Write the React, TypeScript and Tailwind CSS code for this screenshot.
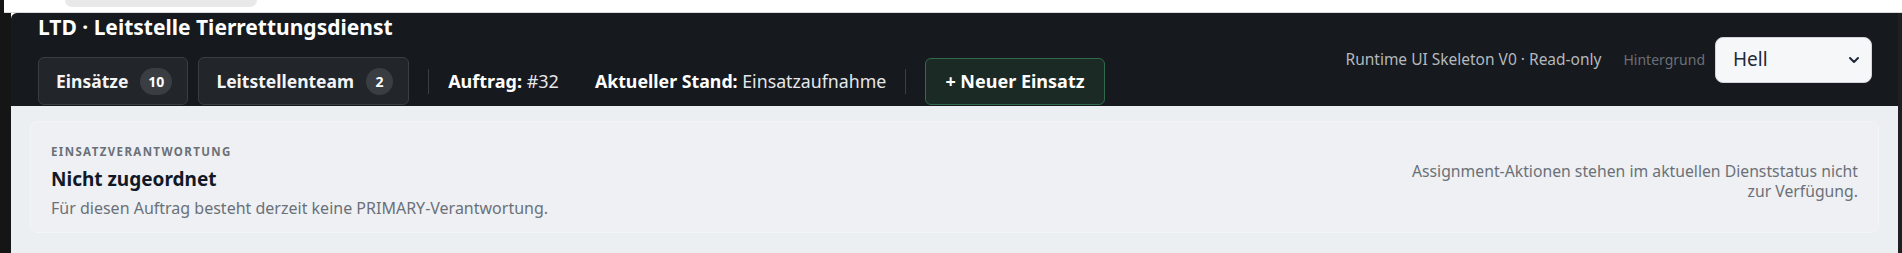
import { ChevronDown } from "lucide-react";

const font = { fontFamily: '"Noto Sans", "Open Sans", sans-serif' };

function NavButton({ label, count }: { label: string; count: number }) {
  return (
    <button className="flex h-[48px] items-center gap-3 rounded-md border border-[#3a3d42] bg-[#222529] pl-[17px] pr-[15px] text-[17.5px] font-bold text-[#f3f4f6]">
      {label}
      <span className="flex h-[27px] min-w-[27px] items-center justify-center rounded-full bg-[#3a3d42] px-2 text-[14px] font-bold text-white">
        {count}
      </span>
    </button>
  );
}

export default function App() {
  return (
    <div className="flex h-[253px] w-full overflow-hidden bg-white" style={font}>
      <div className="w-[4px] bg-[#151515]" />
      <div className="flex flex-1 flex-col">
        <div className="h-[13px] border-b border-[#d9d9d9]">
          <div className="ml-[61px] h-[7px] w-[192px] rounded-b-lg bg-[#e9e9e9]" />
        </div>
        <div className="flex flex-1">
          <div className="w-[7px] bg-[#151515]" />
          <div className="flex flex-1 flex-col overflow-hidden rounded-tl-md">
            <header className="flex h-[93px] items-center justify-between bg-[#16191d] pl-[27px] pr-[26px]">
              <div className="flex h-full flex-col justify-between pt-[2px] pb-[1px]">
                <h1 className="text-[21px] font-bold leading-[24px] text-white">
                  LTD · Leitstelle Tierrettungsdienst
                </h1>
                <div className="flex items-center">
                  <NavButton label="Einsätze" count={10} />
                  <div className="ml-[10px]">
                    <NavButton label="Leitstellenteam" count={2} />
                  </div>
                  <div className="mx-[19px] h-[25px] w-px bg-[#3a3d42]" />
                  <span className="text-[18px] text-[#e5e7eb]">
                    <b className="text-white">Auftrag:</b> #32
                  </span>
                  <span className="ml-[36px] text-[17.75px] text-[#e5e7eb]">
                    <b className="text-white">Aktueller Stand:</b> Einsatzaufnahme
                  </span>
                  <div className="mx-[19px] h-[25px] w-px bg-[#3a3d42]" />
                  <button className="flex h-[47px] items-center rounded-md border border-[#2f6b4b] bg-[#1b2a24] px-[19px] text-[18px] font-bold text-white">
                    + Neuer Einsatz
                  </button>
                </div>
              </div>
              <div className="flex items-center">
                <span className="text-[15.5px] text-[#b4b8be]">Runtime UI Skeleton V0 · Read-only</span>
                <span className="ml-[22px] text-[14px] text-[#6b7078]">Hintergrund</span>
                <div className="relative ml-[10px]">
                  <select className="h-[46px] w-[157px] appearance-none rounded-lg border border-[#d1d5db] bg-[#f5f7f9] pl-[17px] text-[19px] text-[#1f2937] outline-none">
                    <option>Hell</option>
                    <option>Dunkel</option>
                  </select>
                  <ChevronDown
                    className="pointer-events-none absolute right-[10px] top-1/2 -translate-y-1/2 text-[#1f2937]"
                    size={16}
                    strokeWidth={3}
                  />
                </div>
              </div>
            </header>
            <main className="flex-1 bg-[#eceff2] px-[19px] pt-[15px]">
              <section className="flex items-center justify-between rounded-lg border border-[#f2f4f6] bg-[#eef0f3] px-[20px] pt-[22px] pb-[14px]">
                <div>
                  <div className="text-[11.5px] font-bold uppercase leading-[16px] tracking-[0.12em] text-[#6b7078]">
                    Einsatzverantwortung
                  </div>
                  <div className="mt-[8px] text-[19px] font-bold leading-[22px] text-[#111827]">Nicht zugeordnet</div>
                  <div className="mt-[8px] text-[16px] leading-[20px] text-[#6b7078]">
                    Für diesen Auftrag besteht derzeit keine PRIMARY-Verantwortung.
                  </div>
                </div>
                <p className="w-[470px] text-right text-[15.75px] leading-[20px] text-[#6b7078]">
                  Assignment-Aktionen stehen im aktuellen Dienststatus nicht zur Verfügung.
                </p>
              </section>
            </main>
          </div>
          <div className="w-[4px] bg-[#1d1f22]" />
        </div>
      </div>
    </div>
  );
}
